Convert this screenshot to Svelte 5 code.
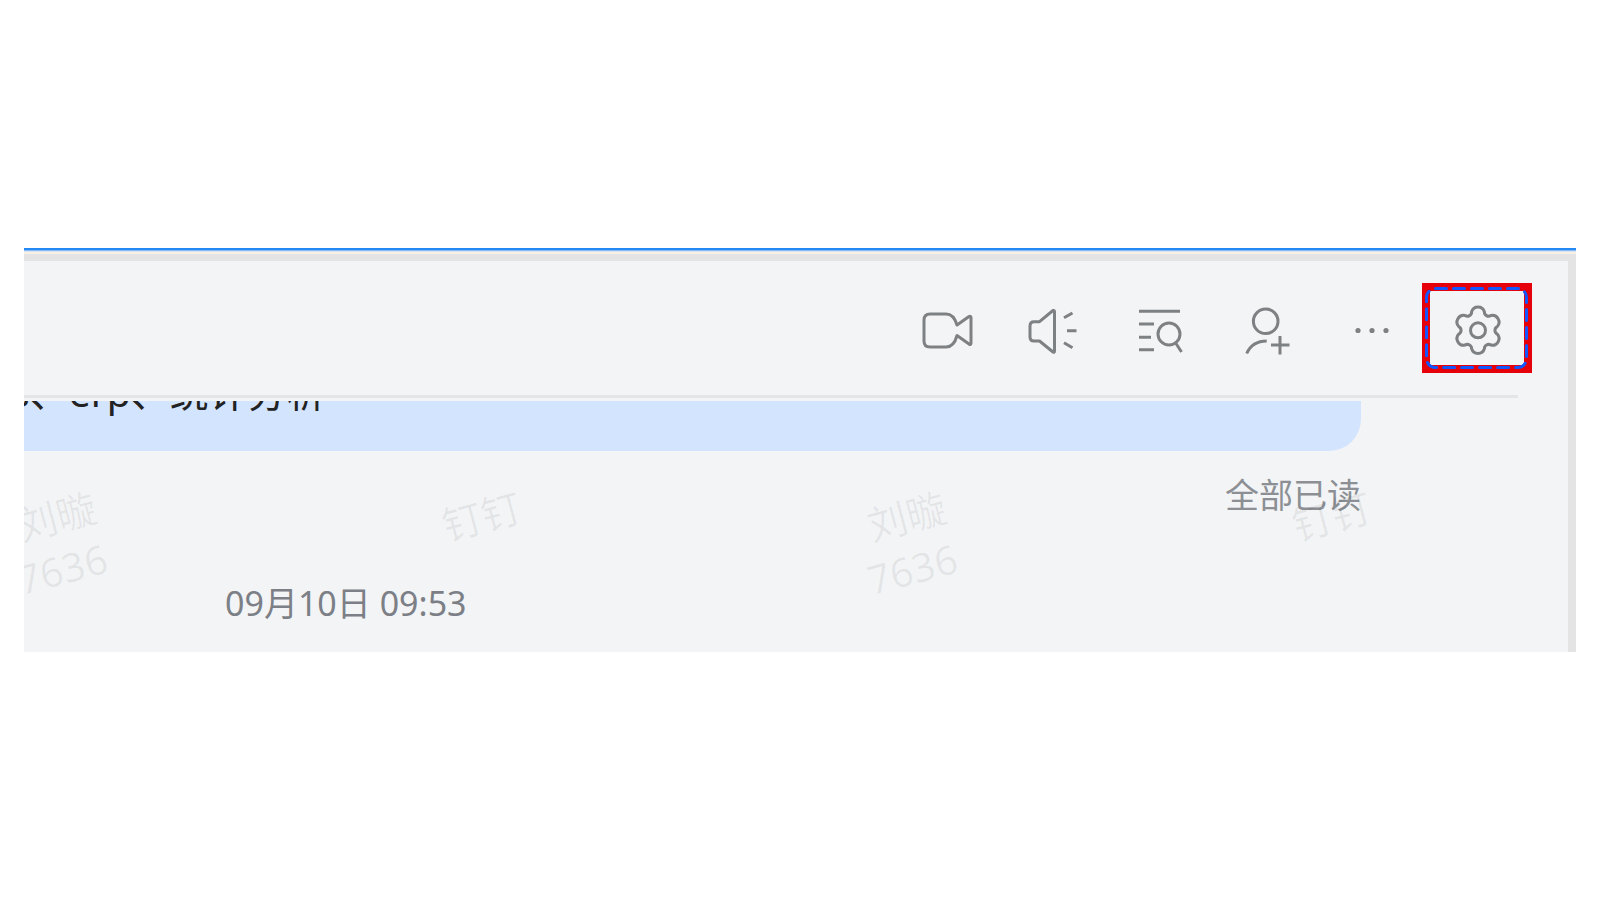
<script lang="ts">
  const marks = [["刘暶", "7636"], ["钉钉"], ["刘暶", "7636"], ["钉钉"]];

  const tools = [
    {
      label: "视频会议",
      paths: [
        "M15 14H31C37 14 40 18 42 25L54 16.5Q56 15.500 56 18V43Q56 45.500 54 44L42 35.500C40 43 37 47 31 47H15Q9 47 9 41V20Q9 14 15 14Z"
      ]
    },
    {
      label: "群公告",
      paths: [
        "M13 21.700H18.500L32 10.500Q33.500 10 33.500 12V51Q33.500 53 32 52L18.500 41H13Q9 41 9 37V26Q9 21.700 13 21.700Z",
        "M43 17.700L51.500 13M46 30.700H55.500M43 42.700L51.500 47.700"
      ]
    },
    {
      label: "聊天记录",
      paths: [
        "M12 11.300H53M12 24H27M12 37.300H24M12 49.700H27",
        "M42 23A11 11 0 1 0 42 45A11 11 0 1 0 42 23ZM49 43.500L54.500 52"
      ]
    },
    {
      label: "添加成员",
      paths: [
        "M32.700 9A12.300 12.300 0 1 0 32.700 33.600A12.300 12.300 0 1 0 32.700 9Z",
        "M13.700 53.500C17 46 23 41 33.700 41M38 45H56.500M47 36V54.500"
      ]
    }
  ];

  // six rounded teeth, each one a convex arc followed by a shallow notch
  function gearPath(cx: number, cy: number, r: number) {
    const point = (deg: number) => {
      const a = ((deg - 90) * Math.PI) / 180;
      return `${(cx + r * Math.cos(a)).toFixed(2)} ${(cy + r * Math.sin(a)).toFixed(2)}`;
    };
    let d = `M${point(-19)}`;
    for (let k = 0; k < 6; k++) {
      d += `A6.7 6.7 0 0 1 ${point(k * 60 + 19)}A4.200 4.200 0 0 0 ${point(k * 60 + 41)}`;
    }
    return d + "Z";
  }
</script>

<main class="page">
  <section class="chat">
    <header class="toolbar">
      {#each tools as tool}
        <button class="tool" aria-label={tool.label}>
          <svg viewBox="0 -2 60 60">
            {#each tool.paths as d}
              <path {d} />
            {/each}
          </svg>
        </button>
      {/each}
      <button class="tool" aria-label="更多">
        <svg class="dots" viewBox="0 -2 60 60">
          <circle cx="19" cy="30.500" r="2.600" />
          <circle cx="33" cy="30.500" r="2.600" />
          <circle cx="47" cy="30.500" r="2.600" />
        </svg>
      </button>
      <button class="tool marked" aria-label="群设置">
        <svg viewBox="0 -2 60 60">
          <path d={gearPath(31, 30.3, 19.6)} />
          <circle cx="31" cy="30.300" r="7.500" />
        </svg>
        <svg class="outline" viewBox="0 0 110 90">
          <rect x="4.500" y="5.500" width="100" height="79" rx="9" />
        </svg>
      </button>
    </header>

    <div class="messages">
      <div class="bubble">
        <p>s、erp、统计分析</p>
      </div>
      <p class="read">全部已读</p>
      <time class="time">09月10日 09:53</time>
    </div>

    <div class="watermarks" aria-hidden="true">
      {#each marks as lines}
        <div class="mark">
          {#each lines as line}
            <span>{line}</span>
          {/each}
        </div>
      {/each}
    </div>
  </section>
</main>

<style>
  :global(body) {
    margin: 0;
    background: #fff;
  }

  .page {
    min-height: 100vh;
    box-sizing: border-box;
    padding: 24px;
    display: flex;
    align-items: center;
    font-family: "Noto Sans", "Noto Sans CJK SC", sans-serif;
  }

  p {
    margin: 0;
  }

  .chat {
    position: relative;
    flex: 1;
    min-width: 0;
    overflow: hidden;
    border-top: 2px solid #2488f5;
    background: #f3f4f6;
    box-shadow: inset 0 1px #8bbcf5, inset 0 2px #d5e3f3, inset 0 4px #f8efe6, inset -8px 11px #e4e4e4;
  }

  .toolbar {
    display: flex;
    justify-content: flex-end;
    align-items: center;
    height: 134px;
    padding: 11px 44px 0 0;
  }

  .tool {
    width: 106px;
    height: 90px;
    padding: 0;
    display: flex;
    justify-content: center;
    align-items: center;
    border: none;
    background: none;
    cursor: pointer;
  }

  .tool svg {
    width: 60px;
    height: 60px;
    flex: none;
    fill: none;
    stroke: #7e8184;
    stroke-width: 3;
    stroke-linejoin: round;
  }

  .tool svg.dots {
    fill: #7e8184;
    stroke: none;
  }

  .marked {
    position: relative;
    width: 110px;
    box-sizing: border-box;
    border: 8px solid #e60009;
  }

  .marked svg.outline {
    position: absolute;
    inset: -8px;
    width: 110px;
    height: 90px;
    stroke: #1456ff;
    stroke-linecap: round;
    stroke-dasharray: 11 7;
  }

  .messages {
    display: flex;
    flex-direction: column;
    margin-right: 58px;
    padding: 3px 157px 27px 0;
    border-top: 3px solid #e4e5e6;
  }

  .bubble {
    height: 50px;
    overflow: hidden;
    border-radius: 0 0 32px 0;
    background: #d3e4ff;
    color: #222;
    font-size: 39px;
    line-height: 50px;
  }

  .bubble p {
    margin: -34px 0 0 -13px;
  }

  .read {
    margin-top: 22px;
    text-align: right;
    color: #8c9095;
    font-size: 34px;
    line-height: 44px;
  }

  .time {
    margin: 64px 0 0 201px;
    color: #7c8086;
    font-size: 34px;
    line-height: 44px;
  }

  .watermarks {
    position: absolute;
    inset: 250px 8px 0 0;
    display: flex;
    margin-left: -6px;
    pointer-events: none;
  }

  .mark {
    flex: 0 0 425px;
    display: flex;
    flex-direction: column;
    align-items: flex-start;
    color: rgba(0, 0, 0, 0.06);
    font-size: 40px;
    line-height: 54px;
  }

  .mark span {
    transform: rotate(-15deg);
    transform-origin: left center;
  }
</style>
